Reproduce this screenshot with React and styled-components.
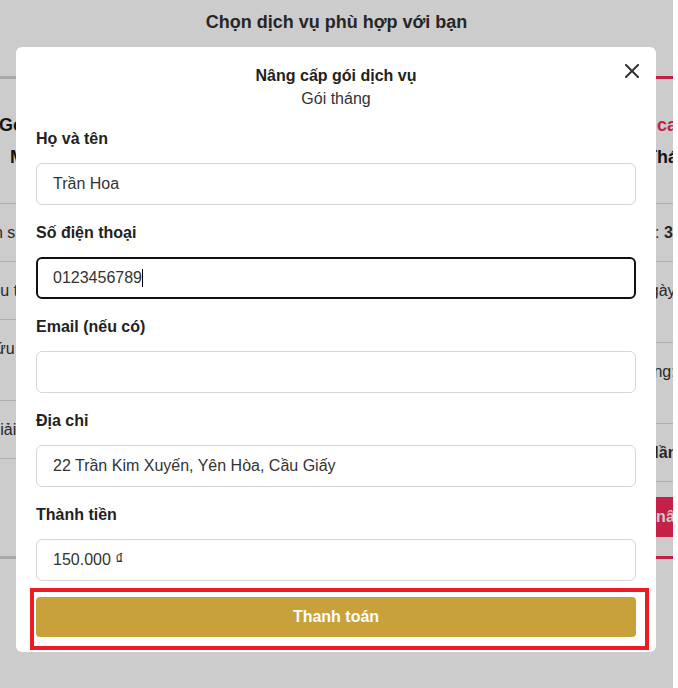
import React from "react";
import styled, { createGlobalStyle } from "styled-components";

const GlobalStyle = createGlobalStyle`
  html, body { margin: 0; padding: 0; overflow: hidden; background: #fff; }
  body { font-family: "Liberation Sans", Arial, sans-serif; }
  *, *::before, *::after { box-sizing: border-box; }
`;

const FONT = `"Liberation Sans", Arial, sans-serif`;

const Page = styled.div`
  width: 673px;
  height: 688px;
  padding-top: 12px;
  background: #fff;
  overflow: hidden;
`;

const PageTitle = styled.h1`
  margin: 0;
  font-size: 18px;
  line-height: 21px;
  font-weight: 700;
  color: #303030;
  text-align: center;
`;

const Cards = styled.div`
  display: flex;
  align-items: stretch;
  gap: 20px;
  margin-top: 43px;
  margin-left: -77px;
`;

const Card = styled.div`
  flex: none;
  width: ${(p) => p.$width}px;
  display: flex;
  flex-direction: column;
  background: #fff;
  border-top: 3px solid ${(p) => p.$accent};
  border-bottom: 3px solid ${(p) => p.$accent};
`;

const CardHead = styled.div`
  display: flex;
  flex-direction: column;
  align-items: center;
  gap: 4px;
  padding: 32px 16px;
  border-bottom: 1px solid #dcdcdc;
`;

const CardTitle = styled.div`
  font-size: 18px;
  line-height: 28px;
  font-weight: 700;
  white-space: nowrap;
  color: ${(p) => p.$color};
`;

const Feature = styled.div`
  padding: 17px 16px;
  font-size: 16px;
  line-height: 23px;
  color: #333;
  white-space: nowrap;
  border-bottom: 1px solid #dcdcdc;
`;

const CardButton = styled.button`
  margin: 15px 16px 19px;
  height: 40px;
  border: 0;
  border-radius: 4px;
  background: #f5285a;
  color: #fff;
  font: 700 16px ${FONT};
`;

const Overlay = styled.div`
  position: fixed;
  top: 0;
  left: 0;
  bottom: 0;
  width: 673px;
  padding: 47px 1px 0 0;
  background: rgba(0, 0, 0, 0.2);
  display: flex;
  justify-content: center;
  align-items: flex-start;
`;

const Modal = styled.div`
  position: relative;
  width: 640px;
  background: #fff;
  border-radius: 6px;
  padding: 17px 20px 15px;
`;

const CloseButton = styled.button`
  position: absolute;
  top: 17px;
  right: 17px;
  width: 14px;
  height: 14px;
  padding: 0;
  border: 0;
  background: none;
  display: flex;
  cursor: pointer;
`;

const ModalHeader = styled.div`
  text-align: center;
`;

const ModalTitle = styled.h2`
  margin: 0;
  font-size: 16px;
  line-height: 23px;
  font-weight: 700;
  color: #222;
`;

const ModalSubtitle = styled.p`
  margin: 0;
  font-size: 16px;
  line-height: 23px;
  color: #333;
`;

const Form = styled.form`
  margin-top: 19px;
  display: flex;
  flex-direction: column;
  gap: 18px;
`;

const Field = styled.div`
  display: flex;
  flex-direction: column;
  gap: 14px;
`;

const Label = styled.label`
  font-size: 16px;
  line-height: 20px;
  font-weight: 700;
  color: #222;
`;

const InputBox = styled.div`
  position: relative;
`;

const Input = styled.input`
  display: block;
  width: 100%;
  height: 42px;
  margin: 0;
  border: ${(p) => (p.$focused ? "2px solid #111" : "1px solid #d5d5dd")};
  border-radius: 6px;
  padding: 0 ${(p) => (p.$focused ? 15 : 16)}px;
  font: 400 16px ${FONT};
  color: #333;
  background: #fff;
  outline: none;
`;

const Caret = styled.span`
  position: absolute;
  left: 106px;
  top: 12px;
  width: 1px;
  height: 18px;
  background: #000;
`;

const SubmitWrap = styled.div`
  position: relative;
  margin-top: 16px;
`;

const SubmitButton = styled.button`
  display: block;
  width: 100%;
  height: 40px;
  border: 0;
  border-radius: 4px;
  background: #c9a13a;
  color: #fff;
  font: 700 16px ${FONT};
`;

const Highlight = styled.span`
  position: absolute;
  top: -9px;
  left: -6px;
  right: -13px;
  bottom: -13px;
  border: 4px solid #ec1c24;
  pointer-events: none;
`;

const fields = [
  { label: "Họ và tên", value: "Trần Hoa" },
  { label: "Số điện thoại", value: "0123456789", focused: true },
  { label: "Email (nếu có)", value: "" },
  { label: "Địa chỉ", value: "22 Trần Kim Xuyến, Yên Hòa, Cầu Giấy" },
  { label: "Thành tiền", value: "150.000 ₫" },
];

export default function App() {
  return (
    <>
      <GlobalStyle />
      <Page>
        <PageTitle>Chọn dịch vụ phù hợp với bạn</PageTitle>
        <Cards>
          <Card $width={247} $accent="#d4d4d4">
            <CardHead>
              <CardTitle $color="#1a1a1a">Gói cơ bản</CardTitle>
              <CardTitle $color="#1a1a1a">Miễn phí</CardTitle>
            </CardHead>
            <Feature>Thời hạn sử dụng: 7 ngày</Feature>
            <Feature>Bộ số liệu tính toán</Feature>
            <Feature>
              Tự tra cứu văn bản pháp
              <br />
              luật
            </Feature>
            <Feature>Mọi lời giải chi tiết</Feature>
          </Card>
          <Card $width={302} $accent="#d4d4d4">
            <CardHead>
              <CardTitle $color="#1a1a1a">Gói tiêu chuẩn</CardTitle>
              <CardTitle $color="#1a1a1a">Tuần</CardTitle>
            </CardHead>
            <Feature>Thời hạn sử dụng: 7 ngày</Feature>
            <Feature>Số lượt tra cứu/ngày: 10</Feature>
            <Feature>Lưu văn bản/tháng: 20</Feature>
            <Feature>Tư vấn luật sư: 1 lần</Feature>
          </Card>
          <Card $width={322} $accent="#f5285a">
            <CardHead>
              <CardTitle $color="#f5285a">Gói cao cấp</CardTitle>
              <CardTitle $color="#1a1a1a">Tháng</CardTitle>
            </CardHead>
            <Feature>
              Thời hạn sử dụng: <b>30 ngày</b>
            </Feature>
            <Feature>
              Số lượt tra cứu/ngày:
              <br />
              <b>Không giới hạn</b>
            </Feature>
            <Feature>
              Lưu văn bản / tháng:
              <br />
              100 văn bản
            </Feature>
            <Feature>
              Tư vấn luật sư: <b>5 lần</b>
            </Feature>
            <CardButton type="button">Mua nâng cấp</CardButton>
          </Card>
        </Cards>
      </Page>

      <Overlay>
        <Modal role="dialog" aria-modal="true">
          <CloseButton type="button" aria-label="Đóng">
            <svg width="14" height="14" viewBox="0 0 14 14" fill="none">
              <path d="M1 1L13 13M13 1L1 13" stroke="#333" strokeWidth="2" strokeLinecap="square" />
            </svg>
          </CloseButton>
          <ModalHeader>
            <ModalTitle>Nâng cấp gói dịch vụ</ModalTitle>
            <ModalSubtitle>Gói tháng</ModalSubtitle>
          </ModalHeader>
          <Form onSubmit={(e) => e.preventDefault()}>
            {fields.map((f) => (
              <Field key={f.label}>
                <Label>{f.label}</Label>
                <InputBox>
                  <Input $focused={f.focused} defaultValue={f.value} readOnly />
                  {f.focused && <Caret />}
                </InputBox>
              </Field>
            ))}
          </Form>
          <SubmitWrap>
            <SubmitButton type="button">Thanh toán</SubmitButton>
            <Highlight />
          </SubmitWrap>
        </Modal>
      </Overlay>
    </>
  );
}
